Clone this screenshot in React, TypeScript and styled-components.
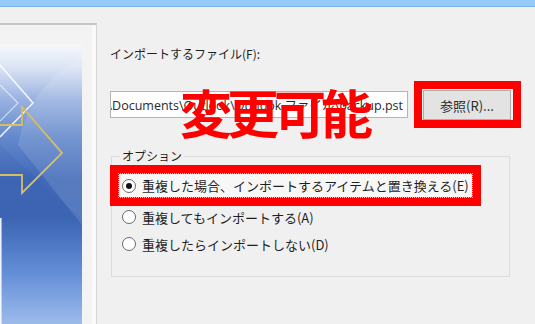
import React from "react";
import styled, { createGlobalStyle } from "styled-components";

const GlobalStyle = createGlobalStyle`
  html, body {
    margin: 0;
    padding: 0;
    width: 535px;
    height: 324px;
    overflow: hidden;
    background: #f0f0f0;
  }
  * { box-sizing: border-box; }
`;

const FONT = `"Noto Sans CJK JP", "Noto Sans", sans-serif`;

const Window = styled.div`
  width: 535px;
  height: 324px;
  display: flex;
  flex-direction: column;
  background: #f0f0f0;
  font-family: ${FONT};
  color: #1f1f1f;
`;

const TitleStrip = styled.div`
  height: 7px;
  flex: none;
  background: #98caf8;
  border-bottom: 1px solid #7fb2e4;
`;

const Main = styled.div`
  flex: 1;
  display: flex;
  min-height: 0;
`;

const SidePanel = styled.div`
  width: 97px;
  flex: none;
  margin-top: 16px;
  border-top: 2px solid #c6c6c6;
  border-right: 1px solid #d6d6d6;
  background: #f3f3f3;
  box-shadow: inset -4px 0 0 #fafafa;
  display: flex;
  flex-direction: column;
  padding-top: 20px;
`;

const Picture = styled.div`
  width: 82px;
  flex: 1;
  overflow: hidden;
  display: flex;
`;

const Content = styled.div`
  position: relative;
  flex: 1;
  padding: 39px 0 0 13px;
  display: flex;
  flex-direction: column;
`;

const FieldLabel = styled.div`
  font-size: 12px;
  line-height: 16px;
  height: 16px;
`;

const FileRow = styled.div`
  margin-top: 19px;
  display: flex;
  align-items: center;
  gap: 6px;
`;

const PathInput = styled.div`
  width: 298px;
  height: 27px;
  background: #ffffff;
  border: 1px solid #b4b4b4;
  display: flex;
  justify-content: flex-end;
  align-items: center;
  overflow: hidden;
  padding-right: 4px;
  font-family: "Open Sans", "Noto Sans CJK JP", sans-serif;
  font-size: 12.5px;
  white-space: nowrap;
  color: #2a2a2a;
`;

const RedFrame = styled.div<{ $w: number; $pad: string }>`
  border: ${(p) => p.$w}px solid #ff0000;
  padding: ${(p) => p.$pad};
  display: flex;
`;

const Button = styled.div`
  width: 88px;
  height: 30px;
  background: #e3e3e3;
  border: 1px solid #adadad;
  display: flex;
  align-items: center;
  justify-content: center;
  font-size: 13px;
  color: #2a2a2a;
`;

const Group = styled.div`
  position: relative;
  margin: 28px 0 0 1px;
  width: 399px;
  height: 121px;
  border: 1px solid #dcdcdc;
  padding-top: 8px;
  display: flex;
  flex-direction: column;
`;

const Legend = styled.div`
  position: absolute;
  top: -9px;
  left: 8px;
  padding: 0 2px;
  background: #f0f0f0;
  font-size: 12px;
  line-height: 16px;
`;

const OptionFrame = styled(RedFrame)`
  margin-left: -2px;
  width: 371px;
`;

const OptionRow = styled.div<{ $focus?: boolean }>`
  height: 23px;
  flex: 1;
  display: flex;
  align-items: center;
  gap: 6px;
  padding-left: 3px;
  font-size: 13px;
  background: ${(p) => (p.$focus ? "#f7f7f7" : "transparent")};
  outline: ${(p) => (p.$focus ? "1px dotted #c8c8c8" : "none")};
`;

const PlainRow = styled(OptionRow)<{ $mt?: number }>`
  flex: none;
  height: 22px;
  margin-left: 7px;
  margin-top: ${(p) => p.$mt ?? 0}px;
`;

const Radio = styled.span<{ $on?: boolean }>`
  width: 14px;
  height: 14px;
  flex: none;
  border-radius: 50%;
  border: 1px solid #6a6a6a;
  background: #ffffff;
  display: flex;
  align-items: center;
  justify-content: center;
  &::after {
    content: "";
    width: 6px;
    height: 6px;
    border-radius: 50%;
    background: ${(p) => (p.$on ? "#111" : "transparent")};
  }
`;

const Callout = styled.div`
  position: absolute;
  left: 83px;
  top: 75px;
  font-size: 52px;
  line-height: 60px;
  font-weight: 700;
  letter-spacing: -5px;
  color: #ff0000;
  white-space: nowrap;
`;

const OutlookArt = () => (
  <svg width="82" height="279" viewBox="0 0 82 279">
    <defs>
      <linearGradient id="bg" x1="0" y1="0" x2="0" y2="1">
        <stop offset="0" stopColor="#f5f7fc" />
        <stop offset="0.08" stopColor="#dbe4f4" />
        <stop offset="0.2" stopColor="#97b0e0" />
        <stop offset="0.33" stopColor="#6388cc" />
        <stop offset="0.48" stopColor="#4169b8" />
        <stop offset="0.62" stopColor="#3f68b7" />
        <stop offset="0.82" stopColor="#6b96de" />
        <stop offset="1" stopColor="#a8c6f4" />
      </linearGradient>
    </defs>
    <rect x="0" y="0" width="82" height="279" fill="url(#bg)" />
    <path d="M82 10 C 50 30, 25 60, 18 100 L 82 180 Z" fill="#ffffff" opacity="0.12" />
    <path d="M0 100 L82 175 L82 279 L0 279 Z" fill="#1c3f8a" opacity="0.08" />
    <polyline
      points="0,20 33,58 0,92"
      fill="none"
      stroke="#ffffff"
      strokeWidth="1.6"
      opacity="0.85"
    />
    <polyline
      points="0,40 18,58 0,76"
      fill="none"
      stroke="#ffffff"
      strokeWidth="1.2"
      opacity="0.6"
    />
    <polygon
      points="-2,80 22,80 22,62 62,108 22,148 22,130 -2,130"
      fill="none"
      stroke="#d8be62"
      strokeWidth="1.8"
    />
    <line x1="0.8" y1="173" x2="0.8" y2="279" stroke="#ffffff" strokeWidth="1.6" opacity="0.9" />
  </svg>
);

export default function App() {
  return (
    <>
      <GlobalStyle />
      <Window>
        <TitleStrip />
        <Main>
          <SidePanel>
            <Picture>
              <OutlookArt />
            </Picture>
          </SidePanel>
          <Content>
            <FieldLabel>インポートするファイル(F):</FieldLabel>
            <FileRow>
              <PathInput>C:\Users\user\Documents\Outlook\Outlook ファイル\backup.pst</PathInput>
              <RedFrame $w={8} $pad="1px 2px 0 1px">
                <Button>参照(R)...</Button>
              </RedFrame>
            </FileRow>
            <Group>
              <Legend>オプション</Legend>
              <OptionFrame $w={9} $pad="0">
                <OptionRow $focus>
                  <Radio $on />
                  重複した場合、インポートするアイテムと置き換える(E)
                </OptionRow>
              </OptionFrame>
              <PlainRow>
                <Radio />
                重複してもインポートする(A)
              </PlainRow>
              <PlainRow $mt={5}>
                <Radio />
                重複したらインポートしない(D)
              </PlainRow>
            </Group>
            <Callout>変更可能</Callout>
          </Content>
        </Main>
      </Window>
    </>
  );
}
